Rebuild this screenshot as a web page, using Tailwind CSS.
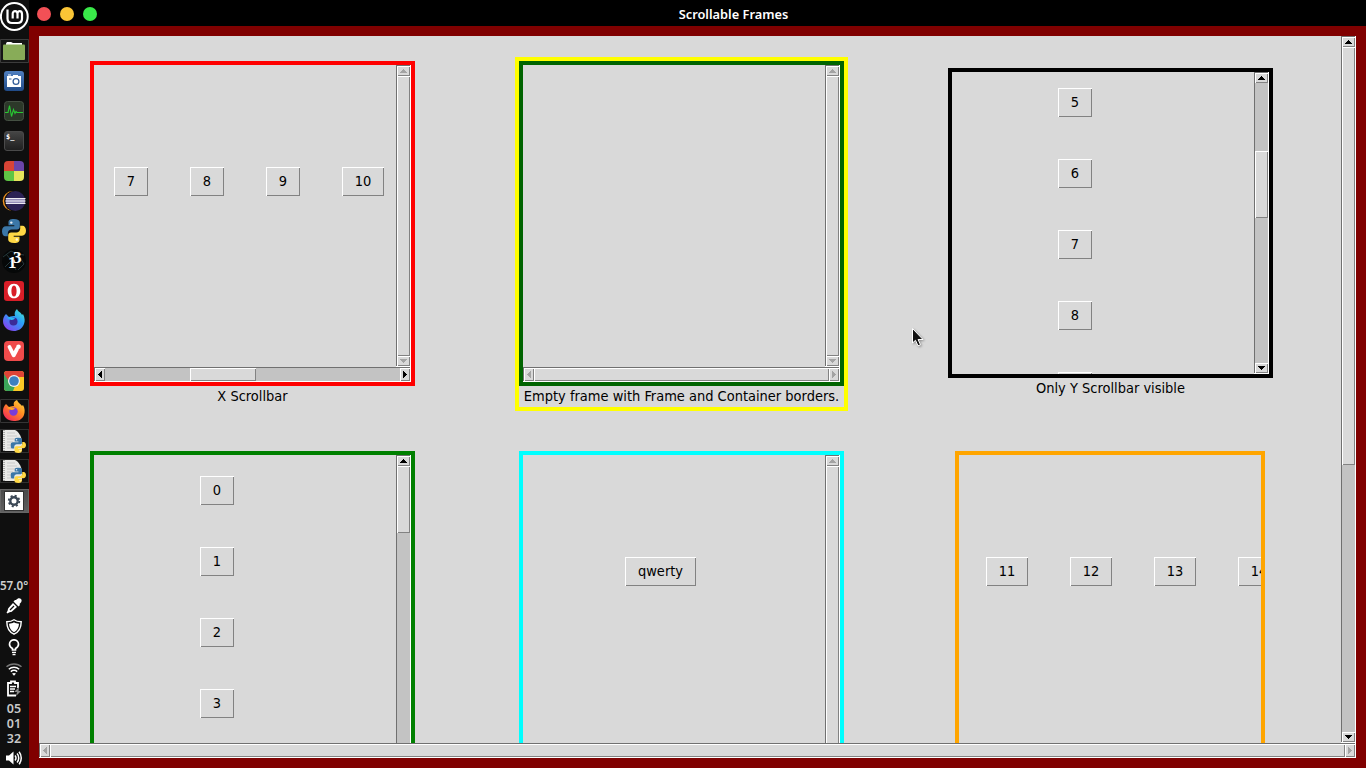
<!DOCTYPE html>
<html lang="en">
<head>
<meta charset="utf-8">
<title>Scrollable Frames</title>
<script src="https://cdn.jsdelivr.net/npm/@tailwindcss/browser@4"></script>
</head>
<body class="w-[1366px] h-[768px] overflow-hidden bg-[#800000] text-black font-['DejaVu_Sans_Condensed','DejaVu_Sans',sans-serif] [font-stretch:condensed]">
<!-- arrow glyphs and gradients shared by all widgets -->
<svg width="0" height="0" class="absolute" aria-hidden="true">
  <defs>
    <symbol id="up" viewBox="0 0 7 4"><path d="M3 0h1v1h1v1h1v1h1v1H0V3h1V2h1V1h1z"/></symbol>
    <symbol id="down" viewBox="0 0 7 4"><path d="M0 0h7v1H6v1H5v1H4v1H3V3H2V2H1V1H0z"/></symbol>
    <symbol id="left" viewBox="0 0 4 7"><path d="M4 0v7H3V6H2V5H1V4H0V3h1V2h1V1h1V0z"/></symbol>
    <symbol id="right" viewBox="0 0 4 7"><path d="M0 0h1v1h1v1h1v1h1v1H3v1H2v1H1v1H0z"/></symbol>
    <symbol id="py" viewBox="0 0 24 24">
      <path fill="#3b77a8" d="M11.8 0C7.500 0 6.500 1.500 6.500 3.500V6.300h5.800v1H4C1.500 7.300 0 9.200 0 12.200s1.400 5 3.500 5H5.800v-2.900c0-2.200 1.800-3.700 3.900-3.700h5.200c1.700 0 2.900-1.300 2.900-3V3.500C17.800 1.300 15.700 0 11.8 0z"/>
      <path fill="#ffd845" d="M12.200 24c4.300 0 5.300-1.500 5.300-3.500v-2.800h-5.800v-1H20c2.500 0 4-1.900 4-4.900s-1.400-5-3.500-5H18.200v2.900c0 2.200-1.800 3.700-3.900 3.700H9.100c-1.700 0-2.900 1.300-2.900 3v4.100C6.200 22.700 8.300 24 12.200 24z"/>
      <circle cx="9.300" cy="3.600" r="1.200" fill="#e8eef5"/><circle cx="14.800" cy="20.500" r="1.200" fill="#fff8dc"/>
    </symbol>
    <symbol id="pydoc" viewBox="0 0 24 24">
      <path fill="#e8e8e6" d="M1 1h12c4 2 6 6 7 11v10H1z"/>
      <path stroke="#bbb" stroke-width=".7" d="M5 4h8M5 7h10M5 10h11M5 13h6M5 16h5M5 19h5"/>
      <path stroke="#666" stroke-width="1" stroke-dasharray="1 1" d="M2 1v21"/>
      <use href="#py" x="8.500" y="8.500" width="15.500" height="15.500"/>
    </symbol>
    <linearGradient id="gBlue" x2="0" y2="1"><stop stop-color="#4f7fc0"/><stop offset="1" stop-color="#204a87"/></linearGradient>
    <linearGradient id="gFoxBlue" x1="1" y1="0" x2="0.200" y2="1"><stop stop-color="#4df0c8"/><stop offset=".45" stop-color="#2aa0f8"/><stop offset="1" stop-color="#8a3cf0"/></linearGradient>
    <linearGradient id="gFox" x1="1" y1="0" x2="0.200" y2="1"><stop stop-color="#ffe14a"/><stop offset=".45" stop-color="#ff9020"/><stop offset="1" stop-color="#f5265c"/></linearGradient>
  </defs>
</svg>

<div class="flex w-[1366px] h-[768px]">
  <!-- desktop panel -->
  <aside class="w-[29px] pr-px h-full shrink-0 bg-[#0f0f0f] flex flex-col items-center overflow-hidden">
    <div class="h-9 w-[29px] -mr-px shrink-0">
      <svg width="29" height="33" viewBox="0 0 29 33" fill="none" stroke="#fff"><circle cx="14.300" cy="16.500" r="13.400" stroke-width="2"/><path stroke-width="2.200" d="M7.500 9.500v9c0 3 1.500 4.500 4.500 4.500h5.500c3 0 4.500-1.500 4.500-4.500v-4.200c0-4.200-4.500-4-4.500-.5v4.700M17.500 13.800c0-3.500-4.800-3.500-4.800 0v4.700M7.500 9.500"/></svg>
    </div>
    <div class="h-[30px] w-[29px] -mr-px flex items-center justify-center"><svg width="29" height="24" viewBox="0 0 29 24"><path d="M.5.500h28v23H.500z" fill="#151515" stroke="#3c3c3c"/><path fill="#fff" d="M6 6c0-3 1-3 2-3h3c1 0 1 1 2 1h9v3H6z"/><rect x="3" y="5.500" width="22" height="15.500" rx="1" fill="#88ac58"/></svg></div>
    <div class="h-[30px] flex items-center"><svg width="22" height="22" viewBox="0 0 22 22"><rect x="1" y="1" width="20" height="20" rx="3" fill="url(#gBlue)"/><path fill="#fff" d="M4 6h14v11H4zM10 5h5v1h-5zM5 4.500h3v1H5z"/><circle cx="13" cy="11.500" r="2.900" fill="#fff" stroke="#335d99" stroke-width="1.300"/><path fill="#335d99" d="M6 8.500h2.500v1H6z"/></svg></div>
    <div class="h-[30px] flex items-center"><svg width="22" height="22" viewBox="0 0 22 22"><rect x="1.500" y="1.500" width="19" height="19" rx="3" fill="#2c3829" stroke="#455043"/><path fill="none" stroke="#28c832" stroke-width="1.100" d="M2 12.500h3l1.500-7 2 11 2-7 1.500 4 1-2 1 1h6"/></svg></div>
    <div class="h-[30px] flex items-center"><div class="w-5 h-5 rounded-[3px] bg-linear-to-b from-[#454545] to-[#202020] border border-[#4a4a4a] text-white text-[7px] leading-[8px] font-bold pl-px pt-px font-['DejaVu_Sans_Mono',monospace]">$_</div></div>
    <div class="h-[30px] flex items-center"><div class="w-5 h-5 rounded-[4px] overflow-hidden grid grid-cols-2 grid-rows-2"><i class="bg-[#d84436]"></i><i class="bg-[#6b45a8]"></i><i class="bg-[#5fc545]"></i><i class="bg-[#e6e45c]"></i></div></div>
    <div class="h-[30px] flex items-center"><svg width="24" height="22" viewBox="0 0 25 22"><circle cx="11" cy="11" r="10.300" fill="#f29422"/><circle cx="13" cy="11" r="10.800" fill="#0f0f0f"/><circle cx="14" cy="11" r="10.300" fill="#2c2255"/><path fill="#8a82b0" d="M4 8h20v6H4z"/><path stroke="#fff" stroke-width="1" d="M4 8.500h20.500M3.500 11h21M4 13.500h20.500"/></svg></div>
    <div class="h-[30px] flex items-center"><svg width="24" height="24"><use href="#py"/></svg></div>
    <div class="h-[30px] flex items-center"><div class="w-6 h-6 rounded-full bg-[#060808] relative text-white font-bold font-['Liberation_Serif',serif]"><svg width="24" height="24" class="absolute" fill="none" stroke="#26383c"><path d="M1 8l8-6 6 3 7 1M3 18l6-6 5 9M14 3l8 12-6 6M4 5l6 7"/></svg><span class="absolute left-[6px] top-[5px] text-[17px] leading-[17px]">1</span><span class="absolute left-[11px] top-0 text-[17px] leading-[17px]">3</span></div></div>
    <div class="h-[30px] flex items-center"><svg width="22" height="22" viewBox="0 0 22 22"><rect x="1" y="1" width="20" height="20" rx="3" fill="#d81e28"/><path fill="#fff" fill-rule="evenodd" d="M11 3.700c4 0 6.300 3.300 6.300 7.300s-2.300 7.300-6.300 7.300S4.700 15 4.700 11 7 3.700 11 3.700zm0 1.700c-1.700 0-2.600 2.400-2.600 5.600s.9 5.600 2.600 5.600 2.600-2.400 2.600-5.600-.9-5.600-2.600-5.600z"/></svg></div>
    <div class="h-[30px] flex items-center"><svg width="24" height="24" viewBox="0 0 24 24"><path fill="url(#gFoxBlue)" d="M4 5l3 3c2-1 4-1 6-1-1-3 0-5 2-7 1 3 4 3 5 6l1-1c2 4 2 7 1 10-2 5-6 7-10 7C6 22 1 18 1 12c0-3 1-5 3-7z"/><circle cx="11.500" cy="12.500" r="4" fill="#3b2a98"/><path fill="#2ab6f6" d="M5 9c3-2 5 0 8 0-1 2-3 2-4 2z"/></svg></div>
    <div class="h-[30px] flex items-center"><svg width="22" height="22" viewBox="0 0 22 22"><rect x="1" y="1" width="20" height="20" rx="4" fill="#ef4b4b"/><path fill="none" stroke="#fff" stroke-width="3.800" stroke-linecap="round" stroke-linejoin="round" d="M6.500 7l4.200 8.300L14 9"/><circle cx="15.500" cy="6.800" r="2.300" fill="#fff"/></svg></div>
    <div class="h-[30px] flex items-center"><svg width="22" height="22" viewBox="0 0 22 22"><rect x="1" y="1" width="20" height="20" rx="3" fill="#fbc926"/><path fill="#de4437" d="M4 1h14c2 0 3 1 3 3v3H10l-4 6-5-8V4c0-2 1-3 3-3z"/><path fill="#3ba45a" d="M1 4l6 9 5 3-2 5H4c-2 0-3-1-3-3z"/><circle cx="11" cy="11" r="6" fill="#f2f2f2"/><circle cx="11" cy="11" r="4.800" fill="#3d7fc0"/></svg></div>
    <div class="h-[30px] -mr-px flex items-center"><svg width="29" height="24" viewBox="0 0 29 24"><path d="M.5.500h28v23H.500z" fill="none" stroke="#353535"/><path fill="url(#gFox)" d="M6 5l3 3c2-1 4-1 5-1-1-3 0-5 3-6 1 3 4 4 5 6l1-1c2 3 2 7 1 10-2 5-6 6-10 6C8 22 3 18 3 12c0-3 1-5 3-7z"/><circle cx="13.500" cy="12.500" r="4.200" fill="#7a3cd8"/><path fill="#ffa326" d="M7 9c3-2 5 0 8 0-1 2-3 2-4 2z"/></svg></div>
    <div class="h-[30px] -mr-px flex items-center"><div class="w-[29px] h-6 border border-[#303030] pl-px"><svg width="24" height="24" class="-mt-px"><use href="#pydoc"/></svg></div></div>
    <div class="h-[30px] -mr-px flex items-center"><div class="w-[29px] h-6 border border-[#303030] pl-px"><svg width="24" height="24" class="-mt-px"><use href="#pydoc"/></svg></div></div>
    <div class="h-[30px] -mr-px flex items-center"><div class="w-[29px] h-6 border border-[#666] bg-linear-to-b from-[#4a4a4a] to-[#606060] flex items-center justify-center"><svg width="20" height="20" viewBox="0 0 20 20" class="mr-px"><rect x=".5" y=".5" width="19" height="19" fill="#fff" stroke="#333"/><circle cx="10" cy="10" r="3.700" fill="none" stroke="#3c4856" stroke-width="2.400"/><circle cx="10" cy="10" r="5.300" fill="none" stroke="#3c4856" stroke-width="1.800" stroke-dasharray="2.080 2.080"/></svg></div></div>
    <!-- tray -->
    <div class="mt-[59px] h-5 leading-[21px] text-[11.700px] font-semibold text-[#cfcfcf] whitespace-nowrap font-['Noto_Sans',sans-serif]">57.0°</div>
    <div class="h-[21px] flex items-center"><svg width="16" height="16" viewBox="0 0 16 16" fill="#fff"><path d="M10 2c2-2.500 4-2 5-1s1 3-1.500 5l.5 1-1.500 1.500L7.500 3.500 9 2z"/><path d="M7 5l4 4-5 4.500c-1 .8-2 .5-3 1L1.500 15.500.5 14.500 1.500 13c.5-1 .2-2 1-3z"/><path stroke="#0f0f0f" stroke-width="1.200" d="M4 12l4-4"/></svg></div>
    <div class="h-[22px] flex items-center"><svg width="16" height="16" viewBox="0 0 16 16"><path fill="none" stroke="#fff" stroke-width="1.400" d="M8 .8c2 1.500 4.500 2 7.200 2C15.200 9 13 13 8 15.200 3 13 .8 9 .8 2.800 3.500 2.800 6 2.300 8 .8z"/><path fill="#fff" d="M8 3.200c1.500 1 3 1.300 5 1.500-.2 4-1.800 6.800-5 8.500-3.200-1.700-4.800-4.500-5-8.500 2-.2 3.500-.5 5-1.500z"/></svg></div>
    <div class="h-[19px] flex items-center"><svg width="12" height="17" viewBox="0 0 12 17"><path fill="none" stroke="#fff" stroke-width="1.700" d="M4.500 11V9.500C2.500 8.500 1.500 7 1.500 5.300a4.500 4.500 0 0 1 9 0c0 1.700-1 3.200-3 4.200V11z"/><path stroke="#fff" stroke-width="1.300" d="M4 13.300h4M4.500 15.500h3"/></svg></div>
    <div class="h-[22px] flex items-center pt-[3px]"><svg width="16" height="13" viewBox="0 0 16 13" fill="none" stroke-width="1.500"><path stroke="#777" d="M.5 3.800c4-3.700 11-3.700 15 0"/><path stroke="#fff" d="M2.800 6.200c3-2.700 7.400-2.700 10.400 0M4.800 8.600c2-1.600 4.400-1.600 6.400 0"/><path fill="#fff" d="M6 10.500c1.300-.8 2.700-.8 4 0l-2 2.200z"/></svg></div>
    <div class="h-[22px] flex items-start pt-px"><svg width="16" height="17" viewBox="0 0 16 17"><path fill="none" stroke="#fff" stroke-width="1.800" d="M12 8V3H9V1.500H5V3H2v12.500h8"/><path stroke="#fff" stroke-width="1.300" d="M4 6.500h6M4 9h5M4 11.500h4"/><path fill="#888" d="M13 7l-5 5h3l-1 4 5-5h-2.500z"/></svg></div>
    <div class="h-[45px] text-[12.500px] leading-[15px] text-center font-semibold text-[#c8c8c8] font-['Noto_Sans',sans-serif]"><div>05</div><div>01</div><div>32</div></div>
    <div class="h-[22px] flex items-center pt-[2px]"><svg width="16" height="14" viewBox="0 0 16 14"><path fill="#fff" d="M0 4.500h3L7.500.5v13L3 9.500H0z"/><path fill="none" stroke="#fff" stroke-width="1.500" d="M9 4.500c1.200 1.500 1.200 3.500 0 5M11 2.500c2.300 2.500 2.300 6.500 0 9M13 .8c3 3.500 3 9 0 12.400"/></svg></div>
  </aside>

  <div class="w-[1337px] flex flex-col">
    <header class="h-[26px] bg-black relative flex items-center justify-center">
      <div class="absolute left-2 top-[7px] flex gap-[9px]"><i class="w-3.5 h-3.5 rounded-full bg-[#f25056]"></i><i class="w-3.5 h-3.5 rounded-full bg-[#fac536]"></i><i class="w-3.5 h-3.5 rounded-full bg-[#39ea49]"></i></div>
      <h1 class="text-white text-[12.800px] font-semibold leading-[26px] pl-[72px] pt-[2px] font-['Noto_Sans',sans-serif]">Scrollable Frames</h1>
    </header>

    <!-- application window -->
    <div class="mx-[10px] my-[10px] w-[1317px] h-[722px] bg-[#d9d9d9] flex flex-col">
      <div class="flex h-[707px]">
        <main class="w-[1302px] h-[707px] overflow-hidden grid grid-cols-[427px_431px_427px] grid-rows-[396px_410px] justify-items-center text-[14.470px]">
          <!-- row 1 -->
          <section class="self-center flex flex-col">
            <div class="w-[325px] h-[325px] border-4 border-[#ff0000]">
              <div class="flex h-[302px]">
                <div class="w-[302px] pl-5 pt-[102px] flex gap-[42px] items-start overflow-hidden">
                  <button class="w-[34px] h-[29px] shrink-0 shadow-[inset_1px_1px_#fff,inset_-1px_-1px_#828282]">7</button>
                  <button class="w-[34px] h-[29px] shrink-0 shadow-[inset_1px_1px_#fff,inset_-1px_-1px_#828282]">8</button>
                  <button class="w-[34px] h-[29px] shrink-0 shadow-[inset_1px_1px_#fff,inset_-1px_-1px_#828282]">9</button>
                  <button class="w-[42px] h-[29px] shrink-0 shadow-[inset_1px_1px_#fff,inset_-1px_-1px_#828282]">10</button>
                </div>
                <div class="w-[15px] p-px flex flex-col bg-[#d9d9d9] shadow-[inset_-1px_-1px_#fff,inset_1px_1px_#707070]">
                  <div class="h-[10px] flex justify-center items-center shadow-[inset_1px_1px_#fff,inset_-1px_-1px_#828282]"><svg width="7" height="4" fill="#a3a3a3"><use href="#up"/></svg></div>
                  <div class="flex-1 shadow-[inset_1px_1px_#fff,inset_-1px_-1px_#828282]"></div>
                  <div class="h-[10px] flex justify-center items-center shadow-[inset_1px_1px_#fff,inset_-1px_-1px_#828282]"><svg width="7" height="4" fill="#a3a3a3"><use href="#down"/></svg></div>
                </div>
              </div>
              <div class="h-[15px] p-px flex bg-[#c3c3c3] shadow-[inset_-1px_-1px_#fff,inset_1px_1px_#707070]">
                <div class="w-[10px] bg-[#d9d9d9] flex justify-center items-center shadow-[inset_1px_1px_#fff,inset_-1px_-1px_#828282]"><svg width="4" height="7"><use href="#left"/></svg></div>
                <div class="flex-1 pl-[85px] flex"><div class="w-[66px] bg-[#d9d9d9] shadow-[inset_1px_1px_#fff,inset_-1px_-1px_#828282]"></div></div>
                <div class="w-[10px] bg-[#d9d9d9] flex justify-center items-center shadow-[inset_1px_1px_#fff,inset_-1px_-1px_#828282]"><svg width="4" height="7"><use href="#right"/></svg></div>
              </div>
            </div>
            <p class="h-[21px] leading-[21px] text-center">X Scrollbar</p>
          </section>

          <section class="self-center flex flex-col border-4 border-[#ffff00]">
            <div class="w-[325px] h-[325px] border-4 border-[#006400]">
              <div class="flex h-[302px]">
                <div class="w-[302px]"></div>
                <div class="w-[15px] p-px flex flex-col bg-[#d9d9d9] shadow-[inset_-1px_-1px_#fff,inset_1px_1px_#707070]">
                  <div class="h-[10px] flex justify-center items-center shadow-[inset_1px_1px_#fff,inset_-1px_-1px_#828282]"><svg width="7" height="4" fill="#a3a3a3"><use href="#up"/></svg></div>
                  <div class="flex-1 shadow-[inset_1px_1px_#fff,inset_-1px_-1px_#828282]"></div>
                  <div class="h-[10px] flex justify-center items-center shadow-[inset_1px_1px_#fff,inset_-1px_-1px_#828282]"><svg width="7" height="4" fill="#a3a3a3"><use href="#down"/></svg></div>
                </div>
              </div>
              <div class="h-[15px] p-px flex bg-[#d9d9d9] shadow-[inset_-1px_-1px_#fff,inset_1px_1px_#707070]">
                <div class="w-[10px] flex justify-center items-center shadow-[inset_1px_1px_#fff,inset_-1px_-1px_#828282]"><svg width="4" height="7" fill="#a3a3a3"><use href="#left"/></svg></div>
                <div class="flex-1 shadow-[inset_1px_1px_#fff,inset_-1px_-1px_#828282]"></div>
                <div class="w-[10px] flex justify-center items-center shadow-[inset_1px_1px_#fff,inset_-1px_-1px_#828282]"><svg width="4" height="7" fill="#a3a3a3"><use href="#right"/></svg></div>
              </div>
            </div>
            <p class="h-[21px] leading-[21px] text-center whitespace-nowrap">Empty frame with Frame and Container borders.</p>
          </section>

          <section class="self-center flex flex-col mb-px">
            <div class="w-[325px] h-[310px] border-4 border-black flex">
              <div class="w-[302px] pl-[106px] pt-4 flex flex-col gap-[42px] items-start overflow-hidden">
                <button class="w-[34px] h-[29px] shrink-0 shadow-[inset_1px_1px_#fff,inset_-1px_-1px_#828282]">5</button>
                <button class="w-[34px] h-[29px] shrink-0 shadow-[inset_1px_1px_#fff,inset_-1px_-1px_#828282]">6</button>
                <button class="w-[34px] h-[29px] shrink-0 shadow-[inset_1px_1px_#fff,inset_-1px_-1px_#828282]">7</button>
                <button class="w-[34px] h-[29px] shrink-0 shadow-[inset_1px_1px_#fff,inset_-1px_-1px_#828282]">8</button>
                <button class="w-[34px] h-[29px] shrink-0 shadow-[inset_1px_1px_#fff,inset_-1px_-1px_#828282]"></button>
              </div>
              <div class="w-[15px] p-px flex flex-col bg-[#c3c3c3] shadow-[inset_-1px_-1px_#fff,inset_1px_1px_#707070]">
                <div class="h-[10px] bg-[#d9d9d9] flex justify-center items-center shadow-[inset_1px_1px_#fff,inset_-1px_-1px_#828282]"><svg width="7" height="4"><use href="#up"/></svg></div>
                <div class="flex-1 pt-[68px]"><div class="h-[67px] bg-[#d9d9d9] shadow-[inset_1px_1px_#fff,inset_-1px_-1px_#828282]"></div></div>
                <div class="h-[10px] bg-[#d9d9d9] flex justify-center items-center shadow-[inset_1px_1px_#fff,inset_-1px_-1px_#828282]"><svg width="7" height="4"><use href="#down"/></svg></div>
              </div>
            </div>
            <p class="h-[21px] leading-[21px] text-center">Only Y Scrollbar visible</p>
          </section>

          <!-- row 2, cut off by the window's viewport -->
          <section class="mt-[19px] w-[325px] h-[325px] border-4 border-[#008000] flex">
            <div class="w-[302px] pl-[106px] pt-[21px] flex flex-col gap-[42px] items-start overflow-hidden">
              <button class="w-[34px] h-[29px] shrink-0 shadow-[inset_1px_1px_#fff,inset_-1px_-1px_#828282]">0</button>
              <button class="w-[34px] h-[29px] shrink-0 shadow-[inset_1px_1px_#fff,inset_-1px_-1px_#828282]">1</button>
              <button class="w-[34px] h-[29px] shrink-0 shadow-[inset_1px_1px_#fff,inset_-1px_-1px_#828282]">2</button>
              <button class="w-[34px] h-[29px] shrink-0 shadow-[inset_1px_1px_#fff,inset_-1px_-1px_#828282]">3</button>
            </div>
            <div class="w-[15px] p-px flex flex-col bg-[#c3c3c3] shadow-[inset_-1px_-1px_#fff,inset_1px_1px_#707070]">
              <div class="h-[10px] bg-[#d9d9d9] flex justify-center items-center shadow-[inset_1px_1px_#fff,inset_-1px_-1px_#828282]"><svg width="7" height="4"><use href="#up"/></svg></div>
              <div class="h-[67px] bg-[#d9d9d9] shadow-[inset_1px_1px_#fff,inset_-1px_-1px_#828282]"></div>
            </div>
          </section>

          <section class="mt-[19px] w-[325px] h-[325px] border-4 border-[#00ffff] flex">
            <div class="w-[302px] pl-[102px] pt-[102px]">
              <button class="block w-[71px] h-[29px] shadow-[inset_1px_1px_#fff,inset_-1px_-1px_#828282]">qwerty</button>
            </div>
            <div class="w-[15px] p-px flex flex-col bg-[#d9d9d9] shadow-[inset_-1px_-1px_#fff,inset_1px_1px_#707070]">
              <div class="h-[10px] flex justify-center items-center shadow-[inset_1px_1px_#fff,inset_-1px_-1px_#828282]"><svg width="7" height="4" fill="#a3a3a3"><use href="#up"/></svg></div>
              <div class="flex-1 shadow-[inset_1px_1px_#fff,inset_-1px_-1px_#828282]"></div>
            </div>
          </section>

          <section class="mt-[19px] mr-px w-[310px] h-[325px] border-4 border-[#ffa500] pl-[27px] pt-[102px] flex gap-[42px] items-start overflow-hidden">
            <button class="w-[42px] h-[29px] shrink-0 shadow-[inset_1px_1px_#fff,inset_-1px_-1px_#828282]">11</button>
            <button class="w-[42px] h-[29px] shrink-0 shadow-[inset_1px_1px_#fff,inset_-1px_-1px_#828282]">12</button>
            <button class="w-[42px] h-[29px] shrink-0 shadow-[inset_1px_1px_#fff,inset_-1px_-1px_#828282]">13</button>
            <button class="w-[42px] h-[29px] shrink-0 shadow-[inset_1px_1px_#fff,inset_-1px_-1px_#828282]">14</button>
          </section>
        </main>

        <div class="w-[15px] p-px flex flex-col bg-[#c3c3c3] shadow-[inset_-1px_-1px_#fff,inset_1px_1px_#707070]">
          <div class="h-[10px] bg-[#d9d9d9] flex justify-center items-center shadow-[inset_1px_1px_#fff,inset_-1px_-1px_#828282]"><svg width="7" height="4"><use href="#up"/></svg></div>
          <div class="flex-1"><div class="h-[418px] bg-[#d9d9d9] shadow-[inset_1px_1px_#fff,inset_-1px_-1px_#828282]"></div></div>
          <div class="h-[10px] bg-[#d9d9d9] flex justify-center items-center shadow-[inset_1px_1px_#fff,inset_-1px_-1px_#828282]"><svg width="7" height="4"><use href="#down"/></svg></div>
        </div>
      </div>
      <div class="h-[15px] p-px flex bg-[#d9d9d9] shadow-[inset_-1px_-1px_#fff,inset_1px_1px_#707070]">
        <div class="w-[10px] flex justify-center items-center shadow-[inset_1px_1px_#fff,inset_-1px_-1px_#828282]"><svg width="4" height="7" fill="#a3a3a3"><use href="#left"/></svg></div>
        <div class="flex-1 shadow-[inset_1px_1px_#fff,inset_-1px_-1px_#828282]"></div>
        <div class="w-[10px] flex justify-center items-center shadow-[inset_1px_1px_#fff,inset_-1px_-1px_#828282]"><svg width="4" height="7" fill="#a3a3a3"><use href="#right"/></svg></div>
      </div>
    </div>
  </div>
</div>

<!-- mouse pointer -->
<svg class="absolute left-[911px] top-[327px] drop-shadow-[1px_1px_1px_#0005]" width="14" height="21" viewBox="0 0 14 21"><path d="M1.500 1.500v14.500l3-2.700 2.500 5.500 2.500-1-2.400-5.300h4.900z" fill="#111" stroke="#fff" stroke-width="1"/></svg>
</body>
</html>
